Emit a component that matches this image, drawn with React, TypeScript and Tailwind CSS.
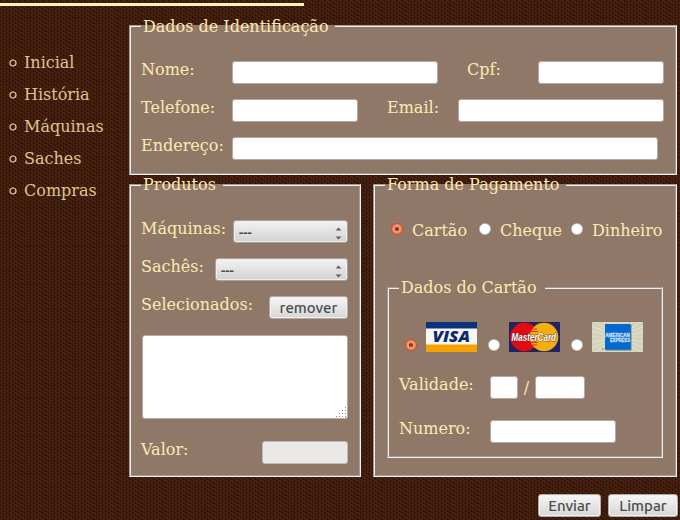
import React from "react";

const inputBase =
  "block h-[23px] shrink-0 rounded-[3px] border border-[#b5aaa3] bg-white p-0 outline-none";
const labelBase = "block shrink-0 whitespace-nowrap leading-[17px]";
const fieldset =
  "m-0 min-w-0 border-2 border-[#f0f0f0] bg-[#907869] [border-style:groove]";
const legend = "h-[18px] px-[2px] whitespace-nowrap";
const buttonBase =
  "flex h-[23px] shrink-0 items-center justify-center rounded-[3px] border border-[#b3aba6] bg-linear-to-b from-[#f6f6f6] to-[#d6d6d6] pb-px font-['Ubuntu','Noto_Sans',sans-serif] text-[15px] leading-none font-medium text-[#4c4c4c] shadow-[inset_0_0_0_1px_#f1f1f1]";

function Radio({ checked = false }: { checked?: boolean }) {
  return (
    <svg width="14" height="14" viewBox="0 0 14 14" className="block shrink-0" role="radio" aria-checked={checked}>
      {checked ? (
        <>
          <circle cx="7" cy="7" r="5.6" fill="#ef7f57" stroke="#c75029" />
          <circle cx="7" cy="7" r="3.7" fill="#f69a78" />
          <circle cx="7" cy="7" r="2.1" fill="#70402e" />
        </>
      ) : (
        <circle cx="7" cy="7" r="5.6" fill="#fff" stroke="#bcb0a8" strokeWidth="0.7" />
      )}
    </svg>
  );
}

function Visa() {
  return (
    <svg width="51" height="30" viewBox="0 0 51 30" className="block shrink-0">
      <rect width="51" height="30" fill="#f7f7f5" />
      <rect width="51" height="6.5" fill="#0b327b" />
      <rect y="22.5" width="51" height="7.5" fill="#f6a200" />
      <text x="6.5" y="20.3" fontFamily="Open Sans, sans-serif" fontWeight="800" fontStyle="italic" fontSize="15.5" textLength="37.5" lengthAdjust="spacingAndGlyphs" fill="#0b2a6b">
        VISA
      </text>
    </svg>
  );
}

function MasterCard() {
  return (
    <svg width="51" height="30" viewBox="0 0 51 30" className="block shrink-0 overflow-visible">
      <rect width="51" height="30" fill="#23245f" />
      <circle cx="15.5" cy="15" r="14.3" fill="#e30b12" />
      <circle cx="35" cy="15" r="14.3" fill="#f2ae0c" />
      <path d="M23 7h5M22 9.5h7M22 20.5h7M23 23h5" stroke="#e3300f" strokeWidth="1.2" />
      <text x="2.5" y="18.6" fontFamily="Liberation Sans, sans-serif" fontWeight="700" fontStyle="italic" fontSize="10" textLength="44.5" lengthAdjust="spacingAndGlyphs" fill="#fff" stroke="#5d2631" strokeWidth="0.8" paintOrder="stroke">
        MasterCard
      </text>
    </svg>
  );
}

function Amex() {
  const rays = Array.from({ length: 32 }, (_, i) => (i * Math.PI) / 16);
  return (
    <svg width="51" height="30" viewBox="0 0 51 30" className="block shrink-0">
      <rect width="51" height="30" fill="#d3d3ba" />
      {rays.map((a) => (
        <line key={a} x1="26" y1="15" x2={26 + 40 * Math.cos(a)} y2={15 + 40 * Math.sin(a)} stroke="#e0e0ca" strokeWidth="1.2" />
      ))}
      <rect x="13.5" y="2.5" width="26" height="26" fill="#5d7f9c" />
      <rect x="13" y="2" width="25.5" height="25.5" fill="#0568cf" />
      <g fontFamily="Liberation Sans, sans-serif" fontWeight="700" fontSize="5.6" fill="#c9e0f5" stroke="#c9e0f5" strokeWidth="0.3">
        <text x="13.3" y="15.2" textLength="24.5" lengthAdjust="spacingAndGlyphs">AMERICAN</text>
        <text x="18" y="20.4" textLength="20" lengthAdjust="spacingAndGlyphs">EXPRESS</text>
      </g>
      <circle cx="11" cy="26.8" r="0.9" fill="#5c93c4" />
    </svg>
  );
}

function Picker({ className }: { className: string }) {
  return (
    <button
      type="button"
      className={`flex h-[23px] shrink-0 items-center justify-between rounded-[3px] border border-[#aaa19b] bg-linear-to-b from-[#f3f3f3] to-[#d2d2d2] pr-[5px] pl-[5px] font-['Ubuntu','Noto_Sans',sans-serif] text-[13px] font-semibold text-[#4c4c4c] shadow-[inset_0_0_0_1px_#eeeeee] ${className}`}
    >
      <span className="pt-px leading-none">---</span>
      <svg width="7" height="13" viewBox="0 0 7 13" className="mt-[3px] block">
        <path d="M.5 3.5 3.5.5l3 3zM.5 9.5l3 3 3-3z" fill="#626262" />
      </svg>
    </button>
  );
}

function Weave() {
  return (
    <svg className="absolute inset-0 -z-10" width="680" height="520">
      <defs>
        <pattern id="threads" width="6" height="4" patternUnits="userSpaceOnUse">
          <rect width="6" height="4" fill="#46200f" />
          <path d="M0 0h1v2h-1zM3 2h1v2h-1z" fill="#2d1007" />
          <path d="M1 1h2v1h-2zM4 3h2v1h-2z" fill="#38170b" />
          <path d="M1 0h2v1h-2zM4 2h2v1h-2z" fill="#4c2512" />
        </pattern>
        <pattern id="shade" width="44" height="38" patternUnits="userSpaceOnUse">
          <path d="M0 4h26v2h-26zM14 17h30v2h-30zM4 30h20v2h-20z" fill="#200800" opacity=".13" />
          <path d="M8 0h2v24h-2zM29 8h2v30h-2z" fill="#200800" opacity=".13" />
        </pattern>
      </defs>
      <rect width="680" height="520" fill="url(#threads)" />
      <rect width="680" height="520" fill="url(#shade)" />
    </svg>
  );
}

export default function App() {
  return (
    <div className="relative isolate h-[520px] w-[680px] overflow-hidden bg-[#3f1c0d] font-['DejaVu_Serif',serif] text-[16px] leading-[19px] text-[#fde9b1]">
      <Weave />
      <div className="pt-[3px]">
        <div className="h-[3px] w-[304px] bg-[#fff0bb]" />
      </div>
      <div className="flex">
        <nav className="w-[129px] shrink-0 pt-10">
          <ul>
            {["Inicial", "História", "Máquinas", "Saches", "Compras"].map((t) => (
              <li key={t} className="flex h-8 items-center pl-[9px] text-[#dbc591]">
                <svg width="8" height="8" viewBox="0 0 8 8" className="mt-[2px] mr-[7px] block">
                  <circle cx="4" cy="4" r="3" fill="none" stroke="#ecd9a4" strokeWidth="1.2" />
                </svg>
                {t}
              </li>
            ))}
          </ul>
        </nav>

        <form className="w-[549px] shrink-0 pt-[11px]">
          <fieldset className={`${fieldset} h-[158px] w-[548px] px-[10px] pt-[26px]`}>
            <legend className={`${legend} w-[194px] leading-[20px]`}>Dados de Identificação</legend>
            <div className="flex flex-col gap-[15px]">
              <div className="flex">
                <label className={`${labelBase} w-[91px]`}>Nome:</label>
                <input className={`${inputBase} w-[206px]`} />
                <label className={`${labelBase} ml-[29px] w-[71px]`}>Cpf:</label>
                <input className={`${inputBase} w-[126px]`} />
              </div>
              <div className="flex">
                <label className={`${labelBase} w-[91px]`}>Telefone:</label>
                <input className={`${inputBase} w-[126px]`} />
                <label className={`${labelBase} ml-[29px] w-[71px]`}>Email:</label>
                <input className={`${inputBase} w-[206px]`} />
              </div>
              <div className="flex">
                <label className={`${labelBase} w-[91px]`}>Endereço:</label>
                <input className={`${inputBase} w-[426px]`} />
              </div>
            </div>
          </fieldset>

          <div className="flex gap-3 pt-px">
            <fieldset className={`${fieldset} h-[301px] w-[232px] pt-[26px] pr-[11px] pl-[10px]`}>
              <legend className={`${legend} w-[82px] leading-[18px]`}>Produtos</legend>
              <div className="flex flex-col gap-[15px]">
                <div className="flex justify-between">
                  <label className={labelBase}>Máquinas:</label>
                  <Picker className="w-[115px]" />
                </div>
                <div className="flex justify-between">
                  <label className={labelBase}>Sachês:</label>
                  <Picker className="w-[133px]" />
                </div>
                <div className="flex justify-between">
                  <label className={labelBase}>Selecionados:</label>
                  <button type="button" className={`${buttonBase} w-[79px]`}>remover</button>
                </div>
              </div>
              <div className="mt-4 ml-px flex h-[84px] w-[206px] items-end justify-end rounded-[3px] border border-[#b5aaa3] bg-white">
                <svg width="12" height="12" viewBox="0 0 12 12" className="block">
                  <path d="M10 1h1v1h-1zM7 4h1v1H7zM10 4h1v1h-1zM4 7h1v1H4zM7 7h1v1H7zM10 7h1v1h-1zM1 10h1v1H1zM4 10h1v1H4zM7 10h1v1H7zM10 10h1v1h-1z" fill="#8b8b8b" />
                </svg>
              </div>
              <div className="mt-[22px] flex justify-between">
                <label className={labelBase}>Valor:</label>
                <input disabled className="block h-[23px] w-[86px] rounded-[3px] border border-[#c3bab4] bg-[#ebe9e7]" />
              </div>
            </fieldset>

            <fieldset className={`${fieldset} h-[301px] w-[304px] pt-[27px] pr-[12px] pl-[10px]`}>
              <legend className={`${legend} w-[181px] leading-[18px]`}>Forma de Pagamento</legend>
              <div className="flex h-[19px] pl-[5px]">
                <label className="flex w-[88px] gap-2"><span className="pt-px"><Radio checked /></span>Cartão</label>
                <label className="flex w-[92px] gap-2"><span className="pt-px"><Radio /></span>Cheque</label>
                <label className="flex gap-2"><span className="pt-px"><Radio /></span>Dinheiro</label>
              </div>
              <fieldset className="mt-[39px] ml-[2px] h-[179px] w-[276px] min-w-0 border-2 border-[#f0f0f0] px-[10px] pt-[25px] [border-style:groove]">
                <legend className={`${legend} w-[146px] leading-[18px]`}>Dados do Cartão</legend>
                <div className="flex gap-[10px] pl-[5px]">
                  <label className="flex items-end gap-2"><Radio checked /><Visa /></label>
                  <label className="flex items-end gap-2"><Radio /><MasterCard /></label>
                  <label className="flex items-end gap-2"><Radio /><Amex /></label>
                </div>
                <div className="mt-6 flex">
                  <label className={`${labelBase} w-[91px]`}>Validade:</label>
                  <input className={`${inputBase} w-[28px]`} />
                  <span className="w-[17px] pt-[2px] text-center">/</span>
                  <input className={`${inputBase} w-[50px]`} />
                </div>
                <div className="mt-[21px] flex">
                  <label className={`${labelBase} w-[91px]`}>Numero:</label>
                  <input className={`${inputBase} w-[126px]`} />
                </div>
              </fieldset>
            </fieldset>
          </div>

          <div className="mt-[17px] flex justify-end gap-[7px]">
            <button type="button" className={`${buttonBase} w-[63px]`}>Enviar</button>
            <button type="button" className={`${buttonBase} w-[70px]`}>Limpar</button>
          </div>
        </form>
      </div>
    </div>
  );
}
